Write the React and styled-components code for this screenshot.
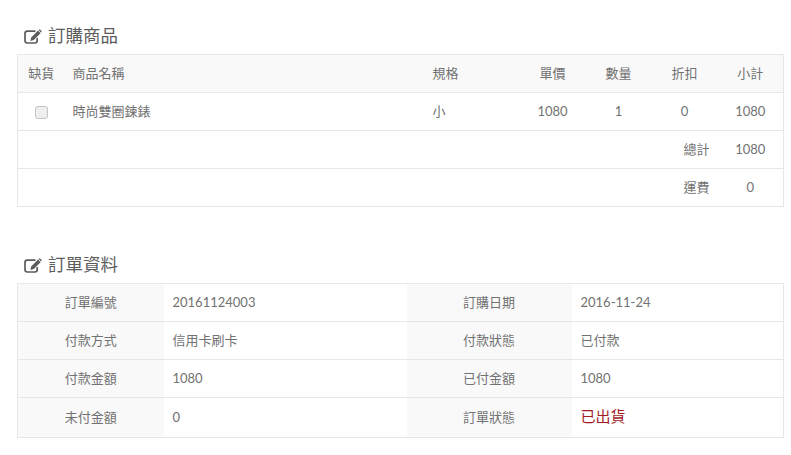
import React from "react";
import styled, { createGlobalStyle } from "styled-components";

const GlobalStyle = createGlobalStyle`
  html, body {
    margin: 0;
    background: #ffffff;
    color: #727272;
    font-family: Lato, "Noto Sans CJK TC", sans-serif;
    font-size: 13px;
  }
`;

const items = [{ name: "時尚雙圈鍊錶", spec: "小", price: 1080, qty: 1, discount: 0, subtotal: 1080 }];

const orderInfo = [
  ["訂單編號", "20161124003", "訂購日期", "2016-11-24"],
  ["付款方式", "信用卡刷卡", "付款狀態", "已付款"],
  ["付款金額", "1080", "已付金額", "1080"],
  ["未付金額", "0", "訂單狀態", "已出貨"],
];

//* pencil-square-o, the package only has the FA5 outline version
const EditIcon = () => (
  <svg viewBox="0 0 18 15" aria-hidden="true">
    <path
      d="M11.5 2.2H3.4C2.1 2.2 1 3.3 1 4.6v7C1 12.9 2.1 14 3.4 14h7.4c1.3 0 2.4-1.1 2.4-2.4V9"
      fill="none"
      stroke="currentColor"
      strokeWidth="1.7"
    />
    <path d="M14 1.6l2.6 2.6-6.8 6.9-3.4.8.8-3.5z" fill="currentColor" />
    <path d="M14.9.7c.4-.4 1-.4 1.4 0l1.1 1.1c.4.4.4 1 0 1.4l-.3.3-2.6-2.5z" fill="currentColor" />
  </svg>
);

function App() {
  return (
    <Page>
      <GlobalStyle />
      <Section>
        <Heading>
          <EditIcon />
          訂購商品
        </Heading>
        <Table>
          <colgroup>
            <col width="47" />
            <col width="360" />
            <col width="95" />
            <col width="66" />
            <col width="66" />
            <col width="66" />
            <col width="66" />
          </colgroup>
          <thead>
            <HeadRow>
              <Cell $align="center">缺貨</Cell>
              <Cell>商品名稱</Cell>
              <Cell>規格</Cell>
              <Cell $align="center">單價</Cell>
              <Cell $align="center">數量</Cell>
              <Cell $align="center">折扣</Cell>
              <Cell $align="center">小計</Cell>
            </HeadRow>
          </thead>
          <tbody>
            {items.map((item) => (
              <tr key={item.name}>
                <Cell $align="center">
                  <Check />
                </Cell>
                <Cell>{item.name}</Cell>
                <Cell>{item.spec}</Cell>
                <Cell $align="center">{item.price}</Cell>
                <Cell $align="center">{item.qty}</Cell>
                <Cell $align="center">{item.discount}</Cell>
                <Cell $align="center">{item.subtotal}</Cell>
              </tr>
            ))}
            <tr>
              <Cell colSpan={5} />
              <Cell $align="right">總計</Cell>
              <Cell $align="center">1080</Cell>
            </tr>
            <tr>
              <Cell colSpan={5} />
              <Cell $align="right">運費</Cell>
              <Cell $align="center">0</Cell>
            </tr>
          </tbody>
        </Table>
      </Section>
      <Section>
        <Heading>
          <EditIcon />
          訂單資料
        </Heading>
        <Table>
          <colgroup>
            <col width="146" />
            <col width="243" />
            <col width="165" />
            <col width="212" />
          </colgroup>
          <tbody>
            {orderInfo.map(([label1, value1, label2, value2]) => (
              <tr key={label1}>
                <LabelCell>{label1}</LabelCell>
                <ValueCell>{value1}</ValueCell>
                <LabelCell>{label2}</LabelCell>
                <ValueCell>{value2 === "已出貨" ? <Shipped>{value2}</Shipped> : value2}</ValueCell>
              </tr>
            ))}
          </tbody>
        </Table>
      </Section>
    </Page>
  );
}

export default App;

const Page = styled.div`
  display: flex;
  flex-direction: column;
  gap: 47px;
  width: 766px;
  padding: 25px 8px 0 17px;
`;

const Section = styled.section`
  display: flex;
  flex-direction: column;
`;

const Heading = styled.h3`
  display: flex;
  align-items: center;
  gap: 6px;
  box-sizing: border-box;
  height: 29px;
  margin: 0;
  padding: 0 0 7px 7px;
  font-size: 17.5px;
  font-weight: 400;
  line-height: 22px;
  color: #5c5c5c;

  svg {
    width: 18px;
    height: 15px;
  }
`;

const Table = styled.table`
  width: 766px;
  table-layout: fixed;
  border-collapse: collapse;
  border: 1px solid #e7e7e7;
`;

const HeadRow = styled.tr`
  background: #f9f9f9;
`;

const Cell = styled.td`
  box-sizing: content-box;
  height: 35px;
  padding: 0 8px 2px;
  border-top: 1px solid #e7e7e7;
  font-size: 13px;
  text-align: ${(p) => p.$align || "left"};
`;

const LabelCell = styled(Cell)`
  background: #f9f9f9;
  text-align: center;
`;

const ValueCell = styled(Cell)`
  padding-left: 9px;
`;

const Check = styled.span`
  display: inline-block;
  width: 11px;
  height: 11px;
  border: 1px solid #c4c4c4;
  border-radius: 3px;
  background: #efefef;
  vertical-align: middle;
`;

const Shipped = styled.span`
  display: inline-block;
  color: #a11c25;
  font-size: 15px;
  line-height: 37px;
`;
